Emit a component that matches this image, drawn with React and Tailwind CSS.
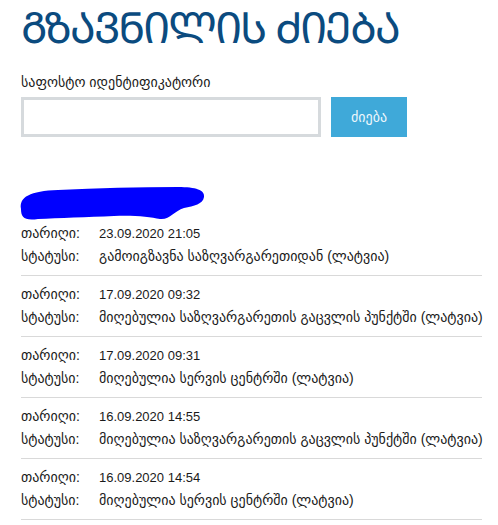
const events = [
  { date: '23.09.2020 21:05', status: 'გამოიგზავნა საზღვარგარეთიდან (ლატვია)' },
  { date: '17.09.2020 09:32', status: 'მიღებულია საზღვარგარეთის გაცვლის პუნქტში (ლატვია)' },
  { date: '17.09.2020 09:31', status: 'მიღებულია სერვის ცენტრში (ლატვია)' },
  { date: '16.09.2020 14:55', status: 'მიღებულია საზღვარგარეთის გაცვლის პუნქტში (ლატვია)' },
  { date: '16.09.2020 14:54', status: 'მიღებულია სერვის ცენტრში (ლატვია)' },
];

const App = () => {
  return (
    <div className="min-h-screen bg-white pl-[21px] pr-[16px] [font-family:'Liberation_Sans','DejaVu_Sans',sans-serif] text-[#1a1a1a]">
      <h1 className="text-[43px] leading-[56px] text-[#0b4b7f] tracking-[-2px] whitespace-nowrap">ᲒᲖᲐᲕᲜᲘᲚᲘᲡ ᲫᲘᲔᲑᲐ</h1>

      <div className="mt-[16px] text-[14px] leading-[20px]">საფოსტო იდენტიფიკატორი</div>

      <div className="mt-[5px] flex gap-[10px]">
        <input
          type="text"
          className="h-[40px] w-[300px] border-[3px] border-[#d6dadd] bg-white px-2 outline-none"
        />
        <button className="h-[40px] w-[76px] bg-[#3fa9d9] text-[14px] text-[#eef7fc]">ძიება</button>
      </div>

      {/* redacted tracking number */}
      <div className="mt-[47px] h-[31px]">
        <svg width="190" height="40" viewBox="0 0 190 40" className="-ml-[3px] overflow-visible">
          <path
            d="M3,25 C1,13 12,7 40,6 C80,4 120,3 160,3 C178,3 187,6 186,13 C185,20 176,22 166,24 C156,27 152,36 142,35 C132,33 116,31 96,32 C70,33 40,34 20,35 C6,37 3,33 3,25 Z"
            fill="#0000ff"
          />
        </svg>
      </div>

      <div>
        {events.map((e, i) => (
          <div key={i} className="border-b border-[#d9d9d9] pt-[7px] pb-[7px] text-[14px] leading-[23px] whitespace-nowrap">
            <div className="flex">
              <span className="w-[78px] shrink-0">თარიღი:</span>
              <span className="text-[13px]">{e.date}</span>
            </div>
            <div className="flex">
              <span className="w-[78px] shrink-0">სტატუსი:</span>
              <span>{e.status}</span>
            </div>
          </div>
        ))}
      </div>
    </div>
  );
};

export default App;
